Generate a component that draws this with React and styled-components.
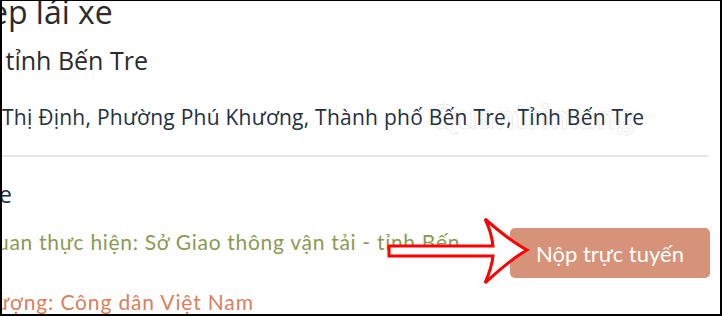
import React from 'react'
import styled, { createGlobalStyle } from 'styled-components'

const GlobalStyle = createGlobalStyle`
  html, body { margin: 0; padding: 0; background: #fff; }
  body { font-family: "Open Sans", "Liberation Sans", sans-serif; }
`

const Frame = styled.div`
  position: relative;
  width: 722px;
  height: 316px;
  box-sizing: border-box;
  border: 2px solid #000;
  border-top-width: 1px;
  background: #fff;
  overflow: hidden;
`

const Section = styled.div`
  display: flex;
  flex-direction: column;
  margin-top: ${p => p.$top || 0}px;
`

const Line = styled.div`
  white-space: nowrap;
  font-family: ${p => p.$alt ? '"Lato", "Open Sans", sans-serif' : '"Open Sans", sans-serif'};
  font-size: ${p => p.$size}px;
  line-height: ${p => p.$lh}px;
  letter-spacing: ${p => p.$ls || 0}px;
  color: ${p => p.$color || '#24303f'};
  margin-left: ${p => p.$shift || 0}px;
  margin-top: ${p => p.$top || 0}px;
`

const Divider = styled.hr`
  border: 0;
  border-top: 2px solid #e6e6e6;
  margin: 0;
  width: 708px;
  margin-left: -2px;
`

const Row = styled.div`
  display: flex;
  align-items: flex-start;
  justify-content: space-between;
  padding-right: 10px;
`

const Button = styled.button`
  width: 200px;
  height: 50px;
  margin-top: 19px;
  border: 0;
  border-radius: 5px;
  background: #d6937a;
  color: #fff;
  font-family: "Lato", sans-serif;
  font-size: 22px;
  cursor: pointer;
`

const Arrow = styled.svg`
  position: absolute;
  left: 384px;
  top: 214px;
`

const Watermark = styled.div`
  position: absolute;
  left: 428px;
  top: 94px;
  font-family: "Lato", sans-serif;
  font-size: 34px;
  font-weight: 700;
  color: transparent;
  -webkit-text-stroke: 1px rgba(0, 0, 0, 0.1);
  letter-spacing: 0.5px;
`

export default function App() {
  return (
    <>
      <GlobalStyle />
      <Frame>
        <Section>
          <Line $size={32} $lh={30} $shift={-12} $top={-4} $color="#2b2b2b">ép lái xe</Line>
          <Line $size={25} $lh={34} $shift={-11} $top={16} $color="#2b2b2b">- tỉnh Bến Tre</Line>
          <Line $size={21} $lh={30} $ls={0.25} $shift={0} $top={25}>Thị Định, Phường Phú Khương, Thành phố Bến Tre, Tỉnh Bến Tre</Line>
        </Section>
        <Section $top={23}>
          <Divider />
          <Line $size={23} $lh={30} $shift={-3} $top={22} $color="#1f2d3d">e</Line>
          <Row>
            <Line $alt $size={21} $lh={30} $ls={0.7} $shift={-5} $top={18} $color="#8a9a52">uan thực hiện: Sở Giao thông vận tải - tỉnh Bến</Line>
            <Button>Nộp trực tuyến</Button>
          </Row>
          <Line $alt $size={21} $lh={30} $ls={0.85} $shift={-6} $top={9} $color="#d9805e">ượng: Công dân Việt Nam</Line>
        </Section>
        <Watermark>Quantrimang</Watermark>
        <Arrow width="146" height="72" viewBox="0 0 146 72">
          <path
            d="M3 31 L107 31 C106 22 103 12 99 4 C114 17 127 28 141 35 C127 43 114 54 99 68 C103 59 106 50 107 41 L3 41 Z"
            fill="#fff"
            stroke="#ff0000"
            strokeWidth="3"
            strokeLinejoin="miter"
          />
        </Arrow>
      </Frame>
    </>
  )
}
